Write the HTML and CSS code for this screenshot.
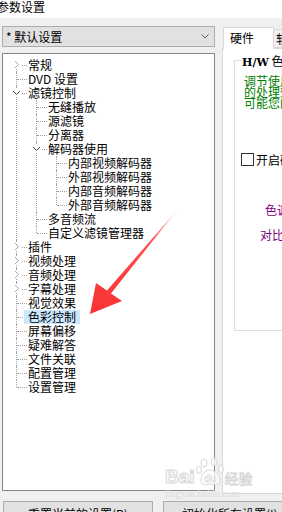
FILE: index.html
```html
<!DOCTYPE html>
<html>
<head>
<meta charset="utf-8">
<link rel="stylesheet" href="styles.css">
</head>
<body>
<div class="title">参数设置</div>
<div class="main">
  <div class="left">
    <div class="combo"><span class="combo-text">* 默认设置</span><svg class="combo-arrow" width="8" height="5" viewBox="0 0 8 5"><path d="M0.5 0.5 L4 4 L7.5 0.5" fill="none" stroke="#606060" stroke-width="1"/></svg></div>
    <div class="tree">
      <ul class="root">
        <li class="first"><div class="row"><span class="exp"><svg width="9" height="9" viewBox="0 0 9 9"><path d="M3 1 L6.5 4.5 L3 8" fill="none" stroke="#a6a6a6"/></svg></span><span class="label">常规</span></div></li>
        <li><div class="row"><span class="label">DVD 设置</span></div></li>
        <li><div class="row"><span class="exp"><svg width="9" height="9" viewBox="0 0 9 9"><path d="M1 3 L4.5 6.5 L8 3" fill="none" stroke="#404040"/></svg></span><span class="label">滤镜控制</span></div>
          <ul>
            <li><div class="row"><span class="label">无缝播放</span></div></li>
            <li><div class="row"><span class="label">源滤镜</span></div></li>
            <li><div class="row"><span class="label">分离器</span></div></li>
            <li><div class="row"><span class="exp"><svg width="9" height="9" viewBox="0 0 9 9"><path d="M1 3 L4.5 6.5 L8 3" fill="none" stroke="#404040"/></svg></span><span class="label">解码器使用</span></div>
              <ul>
                <li><div class="row"><span class="label">内部视频解码器</span></div></li>
                <li><div class="row"><span class="label">外部视频解码器</span></div></li>
                <li><div class="row"><span class="label">内部音频解码器</span></div></li>
                <li class="last"><div class="row"><span class="label">外部音频解码器</span></div></li>
              </ul>
            </li>
            <li><div class="row"><span class="label">多音频流</span></div></li>
            <li class="last"><div class="row"><span class="label">自定义滤镜管理器</span></div></li>
          </ul>
        </li>
        <li><div class="row"><span class="exp"><svg width="9" height="9" viewBox="0 0 9 9"><path d="M3 1 L6.5 4.5 L3 8" fill="none" stroke="#a6a6a6"/></svg></span><span class="label">插件</span></div></li>
        <li><div class="row"><span class="exp"><svg width="9" height="9" viewBox="0 0 9 9"><path d="M3 1 L6.5 4.5 L3 8" fill="none" stroke="#a6a6a6"/></svg></span><span class="label">视频处理</span></div></li>
        <li><div class="row"><span class="exp"><svg width="9" height="9" viewBox="0 0 9 9"><path d="M3 1 L6.5 4.5 L3 8" fill="none" stroke="#a6a6a6"/></svg></span><span class="label">音频处理</span></div></li>
        <li><div class="row"><span class="exp"><svg width="9" height="9" viewBox="0 0 9 9"><path d="M3 1 L6.5 4.5 L3 8" fill="none" stroke="#a6a6a6"/></svg></span><span class="label">字幕处理</span></div></li>
        <li><div class="row"><span class="label">视觉效果</span></div></li>
        <li><div class="row"><span class="label selected">色彩控制</span></div></li>
        <li><div class="row"><span class="label">屏幕偏移</span></div></li>
        <li><div class="row"><span class="label">疑难解答</span></div></li>
        <li><div class="row"><span class="label">文件关联</span></div></li>
        <li><div class="row"><span class="label">配置管理</span></div></li>
        <li class="last"><div class="row"><span class="label">设置管理</span></div></li>
      </ul>
    </div>
  </div>
  <div class="right">
    <div class="tabs">
      <div class="tab active">硬件</div>
      <div class="tab">软件</div>
    </div>
    <div class="panel">
      <div class="group">
        <div class="legend"><b class="hw">H/W</b> 色彩控制</div>
        <div class="desc">调节使用硬件加速时的颜色<br>的处理效果，此功能仅在<br>可能您的显卡不支持</div>
        <div class="check-row"><span class="checkbox"></span><span class="check-label">开启硬件颜色控制</span></div>
        <div class="purple p1">色调</div>
        <div class="purple p2">对比度</div>
      </div>
    </div>
  </div>
</div>
<div class="buttons">
  <div class="btn b1">重置当前的设置(R)</div>
  <div class="btn b2">初始化所有设置(I)</div>
</div>
<div class="watermark">
  <span class="wm-bai">Bai</span><svg class="wm-paw" width="30" height="30" viewBox="0 0 30 30"><g fill="rgba(255,255,255,0.7)" stroke="#d6d6d6" stroke-width="1"><ellipse cx="9" cy="6" rx="3" ry="4"/><ellipse cx="19" cy="5" rx="3" ry="4"/><ellipse cx="4" cy="13" rx="2.5" ry="3.5"/><ellipse cx="26" cy="12" rx="2.5" ry="3.5"/><path d="M6 24 C6 17 10 13 15 13 C20 13 25 18 25 24 C25 28 20 28 15 27 C10 28 6 28 6 24 Z"/></g><text x="15" y="25" text-anchor="middle" font-family="Liberation Sans" font-weight="bold" font-size="10" fill="rgba(255,255,255,0.8)" stroke="#d6d6d6" stroke-width="0.6">du</text></svg><span class="wm-jy">经验</span>
  <div class="wm-url">jingyan.baidu.com</div>
</div>
<svg class="arrow" width="282" height="512" viewBox="0 0 282 512">
  <defs>
    <linearGradient id="ag" x1="178" y1="209" x2="95" y2="310" gradientUnits="userSpaceOnUse">
      <stop offset="0" stop-color="#ff4040" stop-opacity="0.15"/>
      <stop offset="0.3" stop-color="#ff3a3a" stop-opacity="0.9"/>
      <stop offset="1" stop-color="#f83434"/>
    </linearGradient>
  </defs>
  <polygon points="178,209 111,293.5 122,301 90,314 96,283 107,290.5" fill="url(#ag)"/>
</svg>
</body>
</html>
```

FILE: styles.css
```css
html, body {
  margin: 0;
  padding: 0;
}
body {
  width: 282px;
  height: 512px;
  overflow: hidden;
  position: relative;
  background: #f0f0f0;
  font-family: "Noto Sans CJK SC", sans-serif;
  font-size: 12px;
  color: #000;
}
.title {
  height: 18px;
  background: #fff;
  line-height: 14px;
  text-indent: -3px;
  white-space: nowrap;
}
.main {
  display: flex;
  padding-top: 8px;
  height: 468px;
}
.left {
  width: 213px;
  margin-left: 2px;
  display: flex;
  flex-direction: column;
  flex-shrink: 0;
}
.combo {
  height: 21px;
  box-sizing: border-box;
  border: 1px solid #adadad;
  background: #e1e1e1;
  display: flex;
  align-items: center;
  justify-content: space-between;
  padding: 0 5px 0 3px;
}
.combo-text {
  white-space: pre;
  line-height: 14px;
}
.tree {
  margin-top: 6px;
  height: 438px;
  box-sizing: border-box;
  border: 1px solid #828790;
  background: #fff;
  padding-top: 4px;
  overflow: hidden;
}
.tree ul {
  list-style: none;
  margin: 0;
  padding: 0;
}
.tree ul ul {
  padding-left: 20px;
}
.tree li {
  position: relative;
}
.tree li::before {
  content: "";
  position: absolute;
  left: 13px;
  top: 0;
  bottom: 0;
  border-left: 1px dotted #a0a0a0;
}
.tree li.first::before {
  top: 7px;
}
.tree li.last::before {
  bottom: auto;
  height: 7px;
}
.row {
  position: relative;
  height: 14px;
  padding-left: 21px;
  display: flex;
  align-items: center;
  white-space: nowrap;
}
.row::before {
  content: "";
  position: absolute;
  left: 14px;
  top: 7px;
  width: 10px;
  border-top: 1px dotted #a0a0a0;
}
.label {
  position: relative;
  padding: 0 4px;
  height: 14px;
  line-height: 14px;
}
.label.selected {
  background: #cce8ff;
}
.exp {
  position: absolute;
  left: 9px;
  top: 2px;
  width: 9px;
  height: 9px;
  background: #fff;
  z-index: 1;
  display: flex;
}
.right {
  margin-left: 7px;
  display: flex;
  flex-direction: column;
  flex-shrink: 0;
  width: 300px;
}
.tabs {
  display: flex;
  align-items: flex-end;
  height: 21px;
  margin-top: 1px;
  padding-left: 1px;
}
.tab {
  box-sizing: border-box;
  height: 19px;
  width: 60px;
  border: 1px solid #d9d9d9;
  border-left: none;
  background: #f0f0f0;
  padding-left: 2px;
  line-height: 17px;
  white-space: nowrap;
}
.tab.active {
  position: relative;
  z-index: 1;
  width: 51px;
  height: 22px;
  margin-bottom: -1px;
  border-left: 1px solid #d9d9d9;
  border-bottom: none;
  background: #fff;
  padding-left: 6px;
  line-height: 20px;
}
.panel {
  box-sizing: border-box;
  height: 446px;
  border: 1px solid #d9d9d9;
  background: #fff;
  padding: 11px 0 0 11px;
}
.group {
  box-sizing: border-box;
  height: 271px;
  width: 280px;
  border: 1px solid #dcdcdc;
  white-space: nowrap;
}
.legend {
  display: block;
  width: max-content;
  height: 13px;
  margin: -7px 0 0 7px;
  background: #fff;
  line-height: 13px;
}
.hw {
  font-family: "DejaVu Serif", serif;
  font-weight: bold;
  font-size: 11px;
}
.desc {
  color: #008000;
  margin: 8px 0 0 9px;
  line-height: 11px;
}
.check-row {
  display: flex;
  align-items: center;
  margin: 45px 0 0 6px;
  height: 13px;
}
.checkbox {
  box-sizing: border-box;
  width: 13px;
  height: 13px;
  border: 1px solid #333;
  background: #fff;
}
.check-label {
  margin-left: 2px;
  line-height: 13px;
}
.purple {
  color: #800080;
  line-height: 13px;
  height: 13px;
}
.p1 {
  margin: 37px 0 0 30px;
}
.p2 {
  margin: 12px 0 0 25px;
}
.buttons {
  display: flex;
  margin-top: 7px;
  padding-left: 3px;
}
.btn {
  box-sizing: border-box;
  flex-shrink: 0;
  height: 23px;
  border: 1px solid #adadad;
  background: #e1e1e1;
  padding-top: 5px;
  line-height: 14px;
  white-space: nowrap;
}
.b1 {
  width: 150px;
  padding-left: 24px;
}
.b2 {
  width: 140px;
  margin-left: 10px;
  padding-left: 18px;
}
.watermark {
  position: absolute;
  left: 165px;
  top: 457px;
  width: 100px;
  white-space: nowrap;
  line-height: 1;
}
.wm-bai {
  display: inline-block;
  vertical-align: bottom;
  font-family: "Liberation Sans", sans-serif;
  font-weight: bold;
  font-size: 19px;
  color: rgba(255, 255, 255, 0.7);
  -webkit-text-stroke: 1px #d6d6d6;
  margin-bottom: 1px;
}
.wm-paw {
  display: inline-block;
  vertical-align: bottom;
}
.wm-jy {
  display: inline-block;
  vertical-align: bottom;
  font-size: 14px;
  color: rgba(255, 255, 255, 0.7);
  -webkit-text-stroke: 0.8px #d6d6d6;
  margin-bottom: 2px;
}
.wm-url {
  font-family: "Liberation Serif", serif;
  font-size: 10px;
  color: #dcdcdc;
  margin-top: 2px;
}
.arrow {
  position: absolute;
  left: 0;
  top: 0;
  pointer-events: none;
}
```
